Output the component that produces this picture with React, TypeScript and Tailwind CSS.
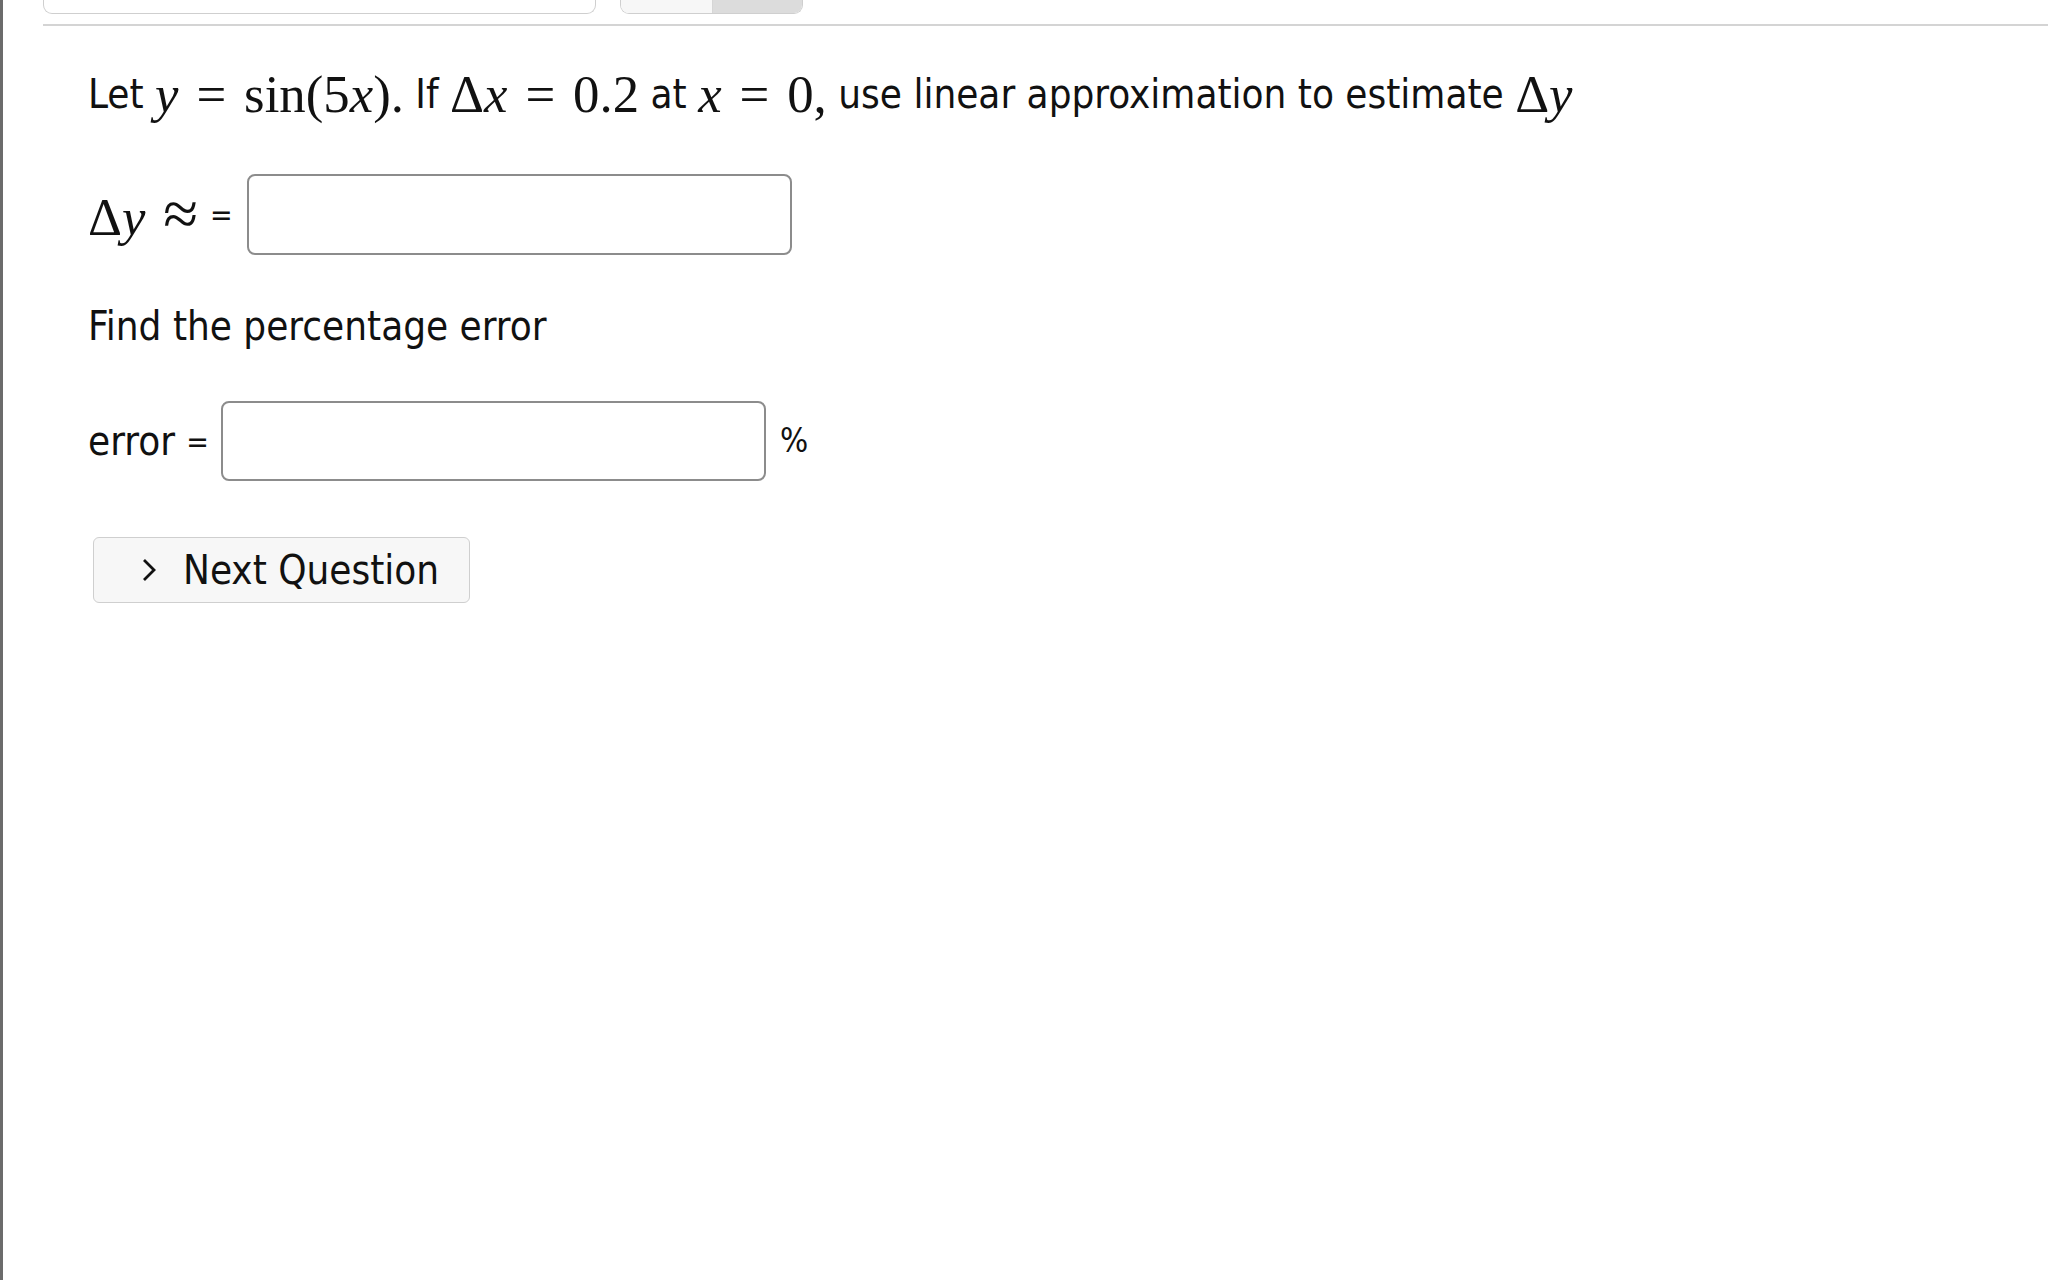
import React from "react";

const M = ({ children }: { children: React.ReactNode }) => (
  <span className="font-['Liberation_Serif','DejaVu_Serif',serif] text-[1.32em] leading-none">{children}</span>
);
const I = ({ children }: { children: React.ReactNode }) => <i className="italic">{children}</i>;
const R = ({ children }: { children: React.ReactNode }) => <span className="mx-[0.34em]">{children}</span>;

export default function App() {
  return (
    <div className="min-h-screen w-full bg-white border-l-[3px] border-[#6b6b6b] text-[#111] font-['DejaVu_Sans',sans-serif] font-stretch-condensed">
      <div className="pl-[40px]">
        <div className="flex items-start">
          <div className="w-[553px] h-[14px] border border-t-0 border-[#cfcfcf] rounded-b-[9px]" />
          <div className="ml-[24px] flex w-[183px] h-[14px] border border-t-0 border-[#cfcfcf] rounded-b-[9px] overflow-hidden">
            <div className="w-[92px] bg-[#f7f7f7] border-r border-[#d6d6d6]" />
            <div className="flex-1 bg-[#dcdcdc]" />
          </div>
        </div>
        <div className="mt-[10px] border-t-2 border-[#d4d4d4]" />
        <div className="pl-[45px] text-[40px]">
          <div className="mt-[44px] h-[48px] flex items-center whitespace-nowrap">
            <span>Let&nbsp;</span>
            <M>
              <I>y</I>
              <R>=</R>sin(5<I>x</I>).
            </M>
            <span>&nbsp;If&nbsp;</span>
            <M>
              Δ<I>x</I>
              <R>=</R>0.2
            </M>
            <span>&nbsp;at&nbsp;</span>
            <M>
              <I>x</I>
              <R>=</R>0,
            </M>
            <span>&nbsp;use linear approximation to estimate&nbsp;</span>
            <M>
              Δ<I>y</I>
            </M>
          </div>
          <div className="mt-[56px] flex items-center">
            <M>
              Δ<I>y</I>
              <span className="ml-[0.28em] text-[1.2em]">≈</span>
            </M>
            <span className="ml-[12px] text-[30px]">=</span>
            <div className="ml-[14px] w-[545px] h-[81px] border-2 border-[#8c8c8c] rounded-[8px] bg-white" />
          </div>
          <div className="mt-[47px] h-[48px] flex items-center">Find the percentage error</div>
          <div className="mt-[51px] flex items-center">
            <span>error&nbsp;</span>
            <span className="text-[30px]">=</span>
            <div className="ml-[12px] w-[545px] h-[80px] border-2 border-[#8c8c8c] rounded-[8px] bg-white" />
            <span className="ml-[14px] text-[33px]">%</span>
          </div>
          <button className="mt-[56px] ml-[5px] w-[377px] h-[66px] flex items-center bg-[#f7f7f7] border border-[#cfcfcf] rounded-[6px] pl-[45px]">
            <svg width="20" height="30" viewBox="0 0 20 30" className="shrink-0">
              <polyline points="5,5 15,15 5,25" fill="none" stroke="#111" strokeWidth="2.8" />
            </svg>
            <span className="ml-[24px]">Next Question</span>
          </button>
        </div>
      </div>
    </div>
  );
}
